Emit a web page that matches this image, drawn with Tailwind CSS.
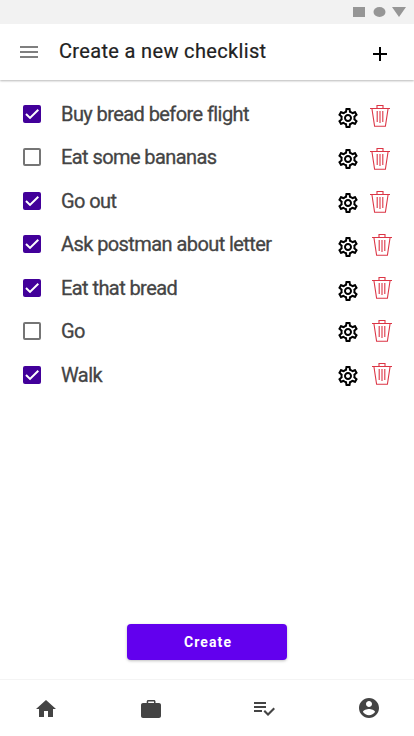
<!DOCTYPE html>
<html lang="en">
<head>
<meta charset="utf-8">
<title>Create a new checklist</title>
<script src="https://cdn.jsdelivr.net/npm/@tailwindcss/browser@4"></script>
</head>
<body class="bg-white">
<svg class="hidden">
  <symbol id="check" viewBox="0 0 18 18"><path d="M3 9 7 12.900l8.300-8.200" fill="none" stroke="#fff" stroke-width="2"/></symbol>
  <symbol id="gear" viewBox="0 0 24 24"><path d="M19.43 12.98c.04-.32.07-.64.07-.98 0-.34-.03-.66-.07-.98l2.11-1.65c.19-.15.24-.42.12-.64l-2-3.46c-.09-.16-.26-.25-.44-.25-.06 0-.12.01-.17.03l-2.49 1c-.52-.4-1.08-.73-1.69-.98l-.38-2.65C14.46 2.18 14.25 2 14 2h-4c-.25 0-.46.18-.49.42l-.38 2.65c-.61.25-1.17.59-1.69.98l-2.49-1c-.06-.02-.12-.03-.18-.03-.17 0-.34.09-.43.25l-2 3.46c-.13.22-.07.49.12.64l2.11 1.65c-.04.32-.07.65-.07.98 0 .33.03.66.07.98l-2.11 1.65c-.19.15-.24.42-.12.64l2 3.46c.09.16.26.25.44.25.06 0 .12-.01.17-.03l2.49-1c.52.4 1.08.73 1.69.98l.38 2.65c.03.24.24.42.49.42h4c.25 0 .46-.18.49-.42l.38-2.65c.61-.25 1.17-.59 1.69-.98l2.49 1c.06.02.12.03.18.03.17 0 .34-.09.43-.25l2-3.46c.12-.22.07-.49-.12-.64l-2.11-1.65zm-1.98-1.71c.04.31.05.52.05.73 0 .21-.02.43-.05.73l-.14 1.13.89.7 1.08.84-.7 1.21-1.27-.51-1.04-.42-.9.68c-.43.32-.84.56-1.25.73l-1.06.43-.16 1.13-.2 1.35h-1.4l-.19-1.35-.16-1.13-1.06-.43c-.43-.18-.83-.41-1.23-.71l-.91-.7-1.06.43-1.27.51-.7-1.21 1.08-.84.89-.7-.14-1.13c-.03-.31-.05-.54-.05-.74s.02-.43.05-.73l.14-1.13-.89-.7-1.08-.84.7-1.21 1.27.51 1.04.42.9-.68c.43-.32.84-.56 1.25-.73l1.06-.43.16-1.13.2-1.35h1.39l.19 1.35.16 1.13 1.06.43c.43.18.83.41 1.23.71l.91.7 1.06-.43 1.27-.51.7 1.21-1.07.85-.89.7.14 1.13zM12 8c-2.21 0-4 1.79-4 4s1.79 4 4 4 4-1.79 4-4-1.79-4-4-4zm0 6c-1.1 0-2-.9-2-2s.9-2 2-2 2 .9 2 2-.9 2-2 2z"/></symbol>
  <symbol id="trash" viewBox="0 0 20 22"><path d="M0 3.500h20M7 3.500v-3h6v3M1.900 3.500 4.600 21.300h10.800L18.100 3.500M7.200 6v11M10 6v12M12.800 6v11" fill="none" stroke="#dc3545" stroke-width="1.100"/></symbol>
</svg>
<div class="flex h-[736px] w-[414px] flex-col overflow-hidden bg-white font-['Roboto',sans-serif]">
  <div class="relative z-10 flex h-6 shrink-0 justify-end bg-[#f2f2f2]">
    <svg class="h-6 w-[64px]" viewBox="350 0 64 24" fill="#969696"><path d="M353 7h12v10h-12zM392 7h14l-7 10z"/><ellipse cx="379.500" cy="12" rx="6" ry="5"/></svg>
  </div>
  <header class="flex h-14 shrink-0 items-start bg-white pr-[22px] pl-5 shadow-[0_1px_2px_rgba(0,0,0,0.28)]">
    <svg class="mt-[22px] h-3 w-[18px]" viewBox="0 0 18 12" fill="#7f7f7f"><path d="M0 0h18v2H0zM0 5h18v2H0zM0 10h18v2H0z"/></svg>
    <h1 class="mt-[15px] ml-[21px] flex-1 text-[20px] leading-6 tracking-[0.34px] text-[#212121] [-webkit-text-stroke:0.2px_#212121]">Create a new checklist</h1>
    <svg class="mt-[18px] h-6 w-6" viewBox="0 0 24 24"><path d="M19 13h-6v6h-2v-6H5v-2h6V5h2v6h6z"/></svg>
  </header>
  <ul class="flex-1 pt-3 pl-[23px] text-[20px] leading-6 tracking-[-0.58px] text-[#444] [-webkit-text-stroke:0.3px_#444]">
    <li class="flex h-[43px] items-start">
      <svg class="mt-[13px] h-[18px] w-[18px] rounded-[2px] bg-[#42009a]"><use href="#check"/></svg>
      <span class="mt-[10px] ml-5 w-[275px]">Buy bread before flight</span>
      <svg class="mt-[14px] h-6 w-6"><use href="#gear"/></svg>
      <svg class="mt-[13px] ml-[10px] h-[22px] w-5"><use href="#trash"/></svg>
    </li>
    <li class="flex h-[44px] items-start">
      <span class="mt-[13px] h-[18px] w-[18px] rounded-[2px] border-2 border-[#757575]"></span>
      <span class="mt-[10px] ml-5 w-[275px]">Eat some bananas</span>
      <svg class="mt-[12px] h-6 w-6"><use href="#gear"/></svg>
      <svg class="mt-[13px] ml-[10px] h-[22px] w-5"><use href="#trash"/></svg>
    </li>
    <li class="flex h-[43px] items-start">
      <svg class="mt-[13px] h-[18px] w-[18px] rounded-[2px] bg-[#42009a]"><use href="#check"/></svg>
      <span class="mt-[10px] ml-5 w-[275px]">Go out</span>
      <svg class="mt-[12px] h-6 w-6"><use href="#gear"/></svg>
      <svg class="mt-[12px] ml-[10px] h-[22px] w-5"><use href="#trash"/></svg>
    </li>
    <li class="flex h-[44px] items-start">
      <svg class="mt-[13px] h-[18px] w-[18px] rounded-[2px] bg-[#42009a]"><use href="#check"/></svg>
      <span class="mt-[10px] ml-5 w-[275px]">Ask postman about letter</span>
      <svg class="mt-[13px] h-6 w-6"><use href="#gear"/></svg>
      <svg class="mt-[12px] ml-3 h-[22px] w-5"><use href="#trash"/></svg>
    </li>
    <li class="flex h-[43px] items-start">
      <svg class="mt-[13px] h-[18px] w-[18px] rounded-[2px] bg-[#42009a]"><use href="#check"/></svg>
      <span class="mt-[10px] ml-5 w-[275px]">Eat that bread</span>
      <svg class="mt-[13px] h-6 w-6"><use href="#gear"/></svg>
      <svg class="mt-[11px] ml-3 h-[22px] w-5"><use href="#trash"/></svg>
    </li>
    <li class="flex h-[44px] items-start">
      <span class="mt-[13px] h-[18px] w-[18px] rounded-[2px] border-2 border-[#757575]"></span>
      <span class="mt-[10px] ml-5 w-[275px]">Go</span>
      <svg class="mt-[11px] h-6 w-6"><use href="#gear"/></svg>
      <svg class="mt-[11px] ml-3 h-[22px] w-5"><use href="#trash"/></svg>
    </li>
    <li class="flex h-[43px] items-start">
      <svg class="mt-[13px] h-[18px] w-[18px] rounded-[2px] bg-[#42009a]"><use href="#check"/></svg>
      <span class="mt-[10px] ml-5 w-[275px]">Walk</span>
      <svg class="mt-[11px] h-6 w-6"><use href="#gear"/></svg>
      <svg class="mt-[10px] ml-3 h-[22px] w-5"><use href="#trash"/></svg>
    </li>
  </ul>
  <button class="mx-auto mb-[19px] h-9 w-40 shrink-0 rounded-[4px] bg-[#6200ee] pl-[2px] text-[14px] font-bold tracking-[1.1px] text-white shadow-[0_1px_3px_rgba(0,0,0,0.25)]">Create</button>
  <nav class="flex h-[57px] shrink-0 items-start border-t border-[#f4f4f4] pt-4 pl-[34px]">
    <svg class="mt-px h-6 w-6" viewBox="0 0 24 24" fill="#444"><path d="M10 20v-6h4v6h5v-8h3L12 3 2 12h3v8z"/></svg>
    <svg class="ml-[81px] h-6 w-6" viewBox="0 0 24 24" fill="#444"><path d="M20 7h-3.500V5.500C16.500 4.700 15.800 4 15 4H9.200C8.400 4 7.700 4.700 7.700 5.500V7H4c-1.100 0-2 .9-2 2v11c0 1.100.9 2 2 2h16c1.100 0 2-.9 2-2V9c0-1.100-.9-2-2-2zM9.200 7V5.400H15V7z"/></svg>
    <svg class="ml-[89px] h-6 w-6" viewBox="0 0 24 24" fill="#444"><path d="M14 10H2v2h12v-2zm0-4H2v2h12V6zM2 16h8v-2H2v2zm19.500-4.500L23 13l-6.990 7-4.510-4.500L13 14l3.010 3 5.490-5.500z"/></svg>
    <svg class="ml-[81px] h-6 w-6" viewBox="0 0 24 24" fill="#444"><path d="M12 2C6.480 2 2 6.480 2 12s4.480 10 10 10 10-4.480 10-10S17.520 2 12 2zm0 3c1.660 0 3 1.340 3 3s-1.340 3-3 3-3-1.340-3-3 1.340-3 3-3zm0 14.200c-2.500 0-4.710-1.280-6-3.220.03-1.990 4-3.080 6-3.080 1.990 0 5.970 1.090 6 3.080-1.290 1.940-3.500 3.220-6 3.220z"/></svg>
  </nav>
</div>
</body>
</html>
